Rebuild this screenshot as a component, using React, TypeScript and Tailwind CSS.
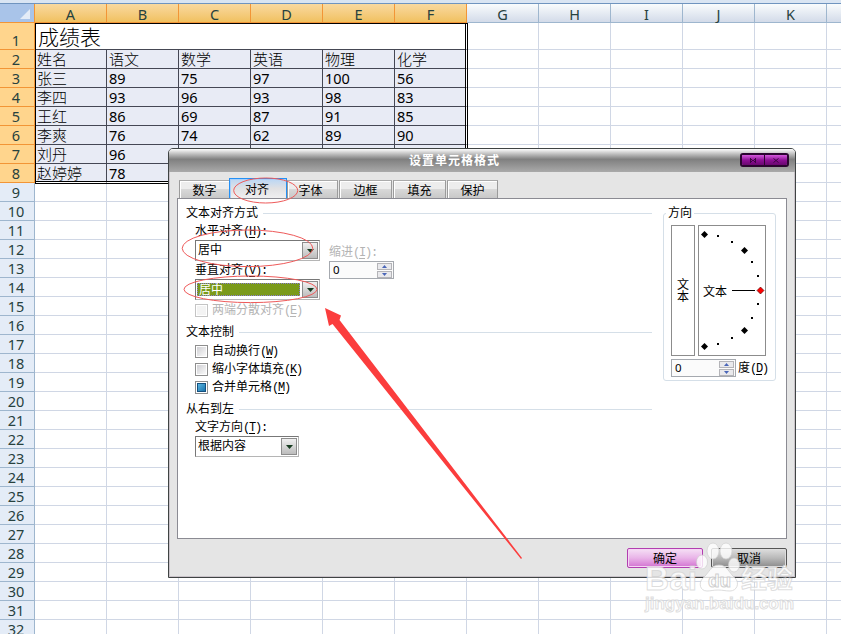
import clsx from "clsx";

const columns = ["A", "B", "C", "D", "E", "F", "G", "H", "I", "J", "K", ""];

const subjects = ["姓名", "语文", "数学", "英语", "物理", "化学"];

const scores = [
  ["张三", "89", "75", "97", "100", "56"],
  ["李四", "93", "96", "93", "98", "83"],
  ["王红", "86", "69", "87", "91", "85"],
  ["李爽", "76", "74", "62", "89", "90"],
  ["刘丹", "96", "", "", "", ""],
  ["赵婷婷", "78", "", "", "", ""],
];

const tableRows = [subjects, ...scores];

const rowNumbers = Array.from({ length: 32 }, (_, i) => i + 1);

function ColumnHeaders() {
  return (
    <div className="flex h-[19px] shrink-0">
      <div className="flex h-[19px] w-[35px] shrink-0 items-end justify-end border-r border-b border-[#f29536] bg-[#a9c4e9] pr-1 pb-[3px]">
        <svg width="10" height="10" viewBox="0 0 10 10">
          <path d="M10 0V10H0Z" fill="#e4ecf7" />
        </svg>
      </div>
      {columns.map((name, i) => (
        <div
          key={i}
          className={clsx(
            "h-[19px] w-[72px] shrink-0 border-r border-b text-center text-[14.5px] leading-[20px] text-[#27413e]",
            i < 6
              ? "border-[#f29536] bg-linear-to-b from-[#f9d99f] to-[#f1c15f]"
              : "border-[#9eb6ce] bg-linear-to-b from-[#f9fcfd] to-[#d3dbe9]"
          )}
        >
          {name}
        </div>
      ))}
    </div>
  );
}

function Sheet() {
  return (
    <div className="flex h-[634px] w-[841px] flex-col overflow-hidden bg-white">
      <div className="h-1 shrink-0 border-b border-[#6f94bf] bg-[#d9e5f3]" />
      <ColumnHeaders />
      {rowNumbers.map((n) => {
        const inTable = n > 1 && n <= 8;
        return (
          <div key={n} className={clsx("flex shrink-0", n === 1 ? "h-[27px]" : "h-[19px]")}>
            <div
              className={clsx(
                "flex w-[35px] shrink-0 items-end justify-center border-r border-b pr-0.5 text-[14.5px] leading-[19px] text-[#27413e]",
                n <= 8 ? "border-[#f29536] bg-[#ffd58d]" : "border-[#9eb6ce] bg-[#e4ecf7]"
              )}
            >
              <span className="h-[18px]">{n}</span>
            </div>
            {n === 1 && (
              <div className="w-[432px] shrink-0 border-r border-b border-[#454754] border-r-[#fff] pl-[3px] text-[21px] leading-[29px] font-light text-black">
                成绩表
              </div>
            )}
            {columns.map((_, i) => {
              if (n === 1 && i < 6) return null;
              const filled = inTable && i < 6;
              const value = filled ? tableRows[n - 2][i] : "";
              return (
                <div
                  key={i}
                  className={clsx(
                    "w-[72px] shrink-0 overflow-hidden border-r border-b pl-[2px] leading-[19px] whitespace-nowrap text-black",
                    filled ? "bg-[#e8ebf5]" : "bg-white",
                    filled && i < 5 && "border-r-[#454754]",
                    filled && i === 5 && "border-r-white",
                    filled && n < 8 && "border-b-[#454754]",
                    filled && n === 8 && "border-b-white",
                    !filled && "border-[#d0d7e5]",
                    value.match(/\d/) ? "text-[14.5px]" : "text-[15px] font-light"
                  )}
                >
                  {value}
                </div>
              );
            })}
          </div>
        );
      })}
    </div>
  );
}

// Label with a fixed-pitch mnemonic such as (H)
function Label({ text, hotkey, colon = false }: { text: string; hotkey: string; colon?: boolean }) {
  return (
    <span className="whitespace-nowrap">
      {text}
      <span className="font-['Liberation_Mono'] text-[12px] tracking-[-1.2px]">
        (<span className="underline underline-offset-2">{hotkey}</span>){colon && ":"}
      </span>
    </span>
  );
}

function SectionTitle({ title }: { title: string }) {
  return (
    <div className="flex h-4 items-center gap-[5px]">
      <span className="shrink-0">{title}</span>
      <span className="h-px grow bg-[#d5dfe8]" />
    </div>
  );
}

function Select({ value, className, selected = false }: { value: string; className: string; selected?: boolean }) {
  return (
    <div className={clsx("flex h-[21px] items-center border border-[#b5b5b5] border-t-[#777] border-l-[#777] bg-white p-px", className)}>
      <span
        className={clsx(
          "h-[13px] grow pl-px leading-[12px]",
          selected ? "border border-dotted border-[#8a7bd8] bg-[#7a9a1b] pl-0 text-white" : "text-black"
        )}
      >
        {value}
      </span>
      <span className="ml-0.5 flex h-[17px] w-4 shrink-0 items-center justify-center border border-[#8d8d8d] bg-linear-to-b from-[#f0f0f0] to-[#bcbcbc]">
        <svg width="7" height="4" viewBox="0 0 7 4">
          <path d="M0 0H7L3.5 4Z" fill="#173b20" />
        </svg>
      </span>
    </div>
  );
}

function Spinner() {
  return (
    <div className="flex h-[18px] w-[65px] shrink-0 items-center justify-between border border-[#a5a9af] bg-[#fbfbfb] pr-px pl-[3px]">
      <span className="text-[11.5px] leading-4 text-black">0</span>
      <span className="flex flex-col gap-px">
        {[0, 1].map((i) => (
          <span key={i} className="flex h-[7px] w-[15px] items-center justify-center border border-[#b4b4b8] bg-[#e9e9ec]">
            <svg width="5" height="3" viewBox="0 0 5 3">
              <path d={i === 0 ? "M2.5 0L5 3H0Z" : "M0 0H5L2.5 3Z"} fill="#4a66b8" />
            </svg>
          </span>
        ))}
      </span>
    </div>
  );
}

function Checkbox({ filled = false, disabled = false }: { filled?: boolean; disabled?: boolean }) {
  return (
    <span
      className={clsx(
        "flex h-[13px] w-[13px] shrink-0 items-center justify-center border bg-white",
        disabled ? "border-[#c4c4c4]" : "border-[#8e8e8e]"
      )}
    >
      <span
        className={clsx(
          "h-[9px] w-[9px]",
          filled
            ? "border border-[#14507e] bg-linear-to-br from-[#58b4e0] to-[#1a75ac]"
            : disabled
              ? "bg-[#f3f3f3]"
              : "bg-linear-to-br from-[#cfcfd3] to-[#fafafa]"
        )}
      />
    </span>
  );
}

const tabs = [
  { name: "数字", width: "w-[51px]" },
  { name: "对齐", width: "w-[58px]", active: true },
  { name: "字体", width: "w-[51px]" },
  { name: "边框", width: "w-[53px]" },
  { name: "填充", width: "w-[53px]" },
  { name: "保护", width: "w-[51px]" },
];

function Tabs() {
  return (
    <div className="flex h-5 items-end pl-[9px]">
      {tabs.map((tab, i) => (
        <div
          key={tab.name}
          className={clsx(
            "shrink-0 border border-b-0 text-center",
            tab.width,
            i > 2 && "ml-px",
            tab.active
              ? "-ml-px h-5 border-[#2490f5] bg-linear-to-b from-[#b9d6f5] via-[#e1e1e3] to-[#efeff0] pr-0.5 leading-[21px] shadow-[inset_1px_1px_0_#a9d0fa]"
              : "h-[18px] border-[#9b9b9b] border-t-[#aaa] bg-linear-to-b from-[#ededed] from-50% via-[#d8d8d8] via-50% to-[#c8c8c8] leading-[19px] shadow-[inset_1px_1px_0_#fff]",
            i === 2 && "pr-1"
          )}
        >
          {tab.name}
        </div>
      ))}
    </div>
  );
}

const smallDots = [[19, 9.5], [33, 16], [53, 36], [59, 50], [59, 78], [53, 92], [33, 112], [19, 118]];
const diamonds = [[5.5, 8.5], [45.5, 24.5], [45.5, 104.5], [5.5, 120.5]];

function Dial() {
  return (
    <div className="flex h-[131px] w-[68px] items-center border border-[#8c8c8c]">
      <span className="-mr-[29px] w-[29px] shrink-0 pt-0.5 pl-1">文本</span>
      <svg width="66" height="129" viewBox="0 0 66 129" className="shrink-0">
        <path d="M33 64.5H56" stroke="#000" />
        {smallDots.map(([x, y]) => (
          <rect key={`${x}-${y}`} x={x - 1} y={Math.round(y) - 1} width="2" height="2" />
        ))}
        {diamonds.map(([x, y]) => (
          <path key={`${x}-${y}`} d={`M${x - 3.5} ${y}l3.5 -3.5l3.5 3.5l-3.5 3.5z`} />
        ))}
        <path d="M58 64.5l3.5 -3.5l3.5 3.5l-3.5 3.5z" fill="#f00" stroke="#400" strokeWidth="0.6" />
      </svg>
    </div>
  );
}

function AlignmentPanel() {
  return (
    <div className="flex h-[341px] w-[610px] justify-between border border-[#8b8b93] bg-white pt-1.5 pr-2.5 pl-2">
      <div className="flex w-[466px] flex-col">
        <SectionTitle title="文本对齐方式" />
        <div className="flex gap-[9px] pl-[9px]">
          <div className="flex w-[125px] flex-col">
            <div className="mt-0.5 h-4 leading-4"><Label text="水平对齐" hotkey="H" colon /></div>
            <Select value="居中" className="mt-[1px] w-[125px]" />
            <div className="mt-[1px] h-[17px] leading-4"><Label text="垂直对齐" hotkey="V" colon /></div>
            <Select value="居中" className="w-[125px]" selected />
          </div>
          <div className="flex flex-col pt-[23px]">
            <div className="h-[17px] leading-4 text-[#b4b4b4]"><Label text="缩进" hotkey="I" colon /></div>
            <Spinner />
          </div>
        </div>
        <div className="mt-0.5 flex h-4 items-center gap-1 pl-[9px] text-[#b4b4b4]">
          <Checkbox disabled />
          <Label text="两端分散对齐" hotkey="E" />
        </div>
        <div className="mt-1.5"><SectionTitle title="文本控制" /></div>
        <div className="mt-0.5 flex flex-col pl-[9px]">
          <div className="flex h-[18px] items-center gap-1"><Checkbox /><Label text="自动换行" hotkey="W" /></div>
          <div className="flex h-[18px] items-center gap-1"><Checkbox /><Label text="缩小字体填充" hotkey="K" /></div>
          <div className="flex h-[18px] items-center gap-1"><Checkbox filled /><Label text="合并单元格" hotkey="M" /></div>
        </div>
        <div className="mt-[5px]"><SectionTitle title="从右到左" /></div>
        <div className="mt-0.5 flex flex-col pl-[9px]">
          <div className="h-[17px] leading-4"><Label text="文字方向" hotkey="T" colon /></div>
          <Select value="根据内容" className="w-[104px]" />
        </div>
      </div>
      <fieldset className="mt-0 h-[176px] w-[113px] rounded-[3px] border border-[#d5dfe8] pt-0 pl-[7px]">
        <legend className="-ml-[5px] px-0.5 leading-4">方向</legend>
        <div className="mt-1 flex gap-[3px]">
          <div className="flex h-[131px] w-6 flex-col items-center justify-center border border-[#8c8c8c] leading-3">
            <span>文</span>
            <span>本</span>
          </div>
          <Dial />
        </div>
        <div className="mt-[3px] flex items-center gap-0.5">
          <Spinner />
          <Label text="度" hotkey="D" />
        </div>
      </fieldset>
    </div>
  );
}

function TitleBar() {
  return (
    <div className="flex h-[23px] items-start justify-end rounded-t-[4px] bg-linear-to-b from-[#fdfdfd] via-[#808080] via-45% to-[#aaaaaa] pr-1.5">
      <div className="grow pt-1 text-center leading-4 font-bold tracking-[1px] text-white">设置单元格格式</div>
      <div className="mt-1 flex h-3.5 w-[49px] overflow-hidden rounded-[3px] border-2 border-[#2b0430]">
        {["M", "X"].map((kind) => (
          <div
            key={kind}
            className={clsx(
              "flex grow items-center justify-center bg-linear-to-b from-[#d558de] via-[#8e0f96] to-[#6a0770]",
              kind === "M" && "border-r border-[#2b0430]"
            )}
          >
            <svg width="6" height="5" viewBox="0 0 6 5" stroke="#3d0542" fill="none">
              <path d={kind === "M" ? "M0.5 0V5M5.5 0V5M1 1L3 3L5 1M1 4L3 2L5 4" : "M0.5 0.5L5.5 4.5M5.5 0.5L0.5 4.5"} />
            </svg>
          </div>
        ))}
      </div>
    </div>
  );
}

function FormatDialog() {
  return (
    <div className="absolute top-[148px] left-[168px] flex h-[430px] w-[628px] flex-col rounded-t-[5px] border border-[#3f4343] bg-[#e5e5e5] text-[12px] leading-4 text-black">
      <TitleBar />
      <div className="flex grow flex-col border-x border-b border-[#c9c3c9] pt-1.5">
        <Tabs />
        <div className="flex pl-[7px]"><AlignmentPanel /></div>
        <div className="mt-[9px] flex justify-end gap-2 pr-[7px]">
          <div className="h-5 w-[76px] rounded-[2px] border border-[#b23eb0] bg-linear-to-b from-[#f5e0f5] via-[#e9b4e8] to-[#d272d1] text-center leading-5 shadow-[inset_0_0_0_1px_#f6d5f5]">
            确定
          </div>
          <div className="h-5 w-[76px] rounded-[2px] border border-[#555] bg-linear-to-b from-[#dedede] via-[#b9b9b9] to-[#8c8c8c] text-center leading-5 shadow-[inset_0_0_0_1px_#ddd]">
            取消
          </div>
        </div>
      </div>
    </div>
  );
}

// Red ellipses and arrow drawn over the dialog
function Annotations() {
  return (
    <svg className="absolute top-0 left-0" width="841" height="634" viewBox="0 0 841 634">
      <g fill="none" stroke="#ee5a5a">
        <ellipse cx="265.7" cy="190.5" rx="32" ry="12.5" />
        <ellipse cx="247.5" cy="248.3" rx="65.3" ry="18.3" />
        <ellipse cx="250.5" cy="289.3" rx="66.5" ry="13.3" />
      </g>
      <path d="M325 308L341 315.5L339.5 320L522 558L521 559L332.5 324L329 326Z" fill="#fb3d3d" />
    </svg>
  );
}

function Watermark() {
  return (
    <svg className="absolute top-[540px] left-[640px]" width="160" height="80" viewBox="0 0 160 80">
      <g fill="#fff" fillOpacity="0.8" stroke="#cfcfcf" strokeOpacity="0.7">
        <ellipse cx="73" cy="11" rx="6" ry="8" />
        <ellipse cx="86" cy="11" rx="6" ry="8" />
        <ellipse cx="62" cy="22" rx="5.5" ry="7" />
        <ellipse cx="94" cy="25" rx="5.5" ry="7" />
        <path d="M79 25c8 0 10 8 16 13c5 5 2 13 -5 13c-5 0 -7 -1 -12 -1c-5 0 -7 1 -11 1c-7 0 -9 -8 -4 -13c6 -5 8 -13 16 -13z" />
        <text x="5" y="50" fontSize="33" fontWeight="700" fontFamily="Liberation Sans" textLength="52" lengthAdjust="spacingAndGlyphs">Bai</text>
        <text x="68" y="47" fontSize="19" fontWeight="700" fontFamily="Liberation Sans" stroke="#bbb">du</text>
        <text x="101" y="48" fontSize="26" fontWeight="700" fontFamily="Noto Sans CJK SC" textLength="52">经验</text>
        <text x="5" y="69" fontSize="17" fontWeight="700" fontFamily="Liberation Sans" textLength="149" lengthAdjust="spacingAndGlyphs">jingyan.baidu.com</text>
      </g>
    </svg>
  );
}

export default function App() {
  return (
    <div className="relative h-[634px] w-[841px] overflow-hidden bg-white font-['Noto_Sans','Noto_Sans_CJK_SC',sans-serif]">
      <Sheet />
      {/* double outline around the merged table */}
      <div className="absolute top-[23px] left-[35px] h-[161px] w-[433px] border-t border-r-3 border-b-3 border-l border-double border-black" />
      <FormatDialog />
      <Annotations />
      <Watermark />
    </div>
  );
}
